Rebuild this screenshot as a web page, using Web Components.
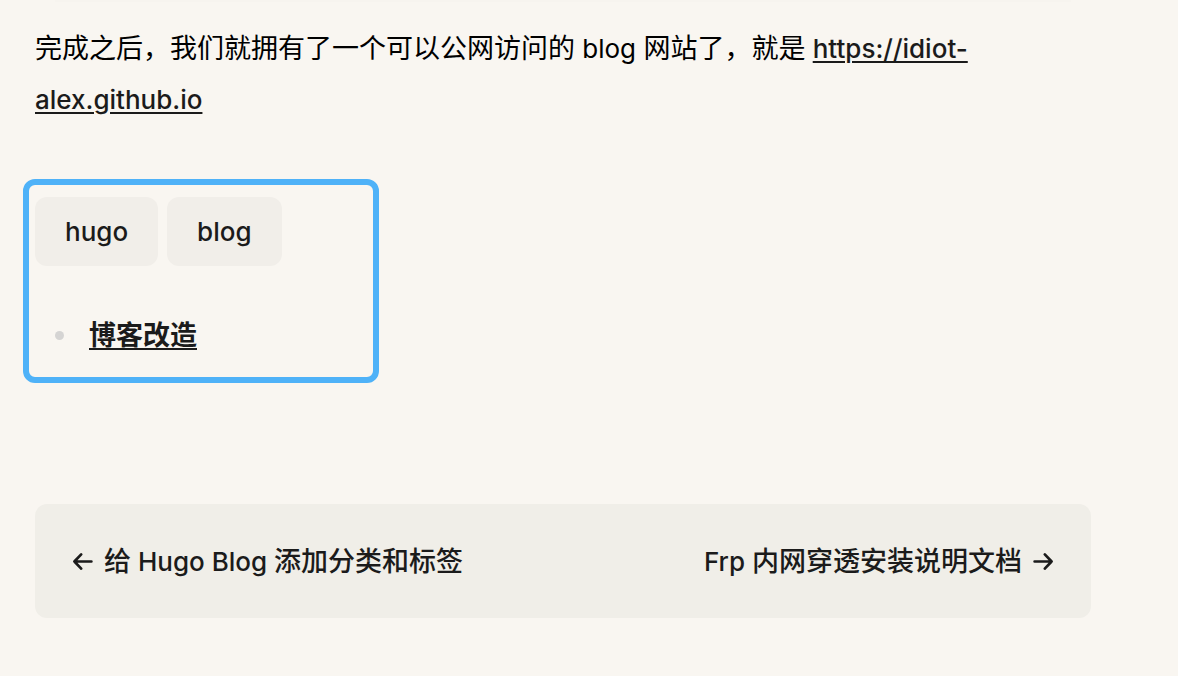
<!DOCTYPE html>
<html lang="zh-CN">
<head>
<meta charset="utf-8">
<meta name="viewport" content="width=device-width, initial-scale=1">
<title>Hugo Blog</title>
<style>
body { margin: 0; background: #f9f6f1; color: #000; font-family: Inter, "Noto Sans CJK SC", sans-serif; font-size: 27px; line-height: 51px; }
.latin { font-size: 26px; }
</style>
</head>
<body>
<blog-post>
  <post-paragraph>完成之后，我们就拥有了一个可以公网访问的<span class="latin"> blog </span>网站了，就是<span class="latin"> <post-link href="https://idiot-alex.github.io">https://idiot-alex.github.io</post-link></span></post-paragraph>
  <term-frame slot="terms">
    <tag-chip class="latin" slot="tags" href="#hugo">hugo</tag-chip>
    <tag-chip class="latin" slot="tags" href="#blog">blog</tag-chip>
    <post-link slot="series" strong href="#series">博客改造</post-link>
  </term-frame>
  <post-pager slot="pager">
    <span slot="prev">给<span class="latin"> Hugo Blog </span>添加分类和标签</span>
    <span slot="next"><span class="latin">Frp </span>内网穿透安装说明文档</span>
  </post-pager>
</blog-post>
<script>
function define(name, html) {
  const template = document.createElement('template');
  template.innerHTML = html;
  customElements.define(name, class extends HTMLElement {
    constructor() {
      super();
      this.attachShadow({ mode: 'open' }).append(template.content.cloneNode(true));
    }
    connectedCallback() {
      const href = this.getAttribute('href');
      if (href) this.shadowRoot.querySelector('a').setAttribute('href', href);
    }
  });
}
define('blog-post', `
<style>
:host { display: block; padding: 0 87px 58px 35px; }
hr { margin: 0 20px 21px; border: 0; height: 2px; background: #f7f4ef; }
.terms { margin: 54px 0 121px -12px; }
</style>
<main><hr><slot></slot><div class="terms"><slot name="terms"></slot></div><slot name="pager"></slot></main>`);
define('post-paragraph', `
<style>:host { display: block; } p { margin: 0; }</style>
<p><slot></slot></p>`);
define('post-link', `
<style>
:host { display: inline; }
a { color: #1b1b1b; font-weight: 500; text-decoration: underline; text-decoration-thickness: 2px; text-underline-offset: 3px; }
:host([strong]) a { font-weight: 700; }
</style>
<a><slot></slot></a>`);
define('tag-chip', `
<style>
:host { display: block; }
a { display: block; padding: 9px 30px; border-radius: 12px; background: #f1eee9; color: #1b1b1b; font-weight: 500; text-decoration: none; }
</style>
<a><slot></slot></a>`);
define('term-frame', `
<style>
:host { display: block; box-sizing: border-box; width: 356px; max-width: 100%; padding: 12px 6px 16px; border: 6px solid #4fb2f8; border-radius: 12px; }
.tags { display: flex; gap: 9px; }
ul { list-style: none; margin: 44px 0 0; padding: 0; }
li { display: flex; align-items: center; gap: 25px; padding-left: 20px; }
li::before { content: ""; width: 9px; height: 9px; border-radius: 50%; background: #d5d4d3; }
</style>
<div class="tags"><slot name="tags"></slot></div>
<ul><li><slot name="series"></slot></li></ul>`);
define('post-pager', `
<style>
:host { display: block; }
nav { display: flex; justify-content: space-between; padding: 32px 36px 31px; border-radius: 12px; background: #f0eee8; }
a { display: flex; align-items: center; gap: 9px; color: #1b1b1b; font-weight: 500; text-decoration: none; }
svg { width: 24px; height: 24px; fill: none; stroke: currentColor; stroke-width: 2.7; stroke-linecap: round; stroke-linejoin: round; }
</style>
<nav>
<a href="#prev"><svg viewBox="0 0 24 24" aria-hidden="true"><path d="M20.4 11.5H3.4M10.2 4.4L3.4 11.5L10.2 18.6"/></svg><slot name="prev"></slot></a>
<a href="#next"><slot name="next"></slot><svg viewBox="0 0 24 24" aria-hidden="true"><path d="M3.6 11.5H20.6M13.8 4.4L20.6 11.5L13.8 18.6"/></svg></a>
</nav>`);
</script>
</body>
</html>
